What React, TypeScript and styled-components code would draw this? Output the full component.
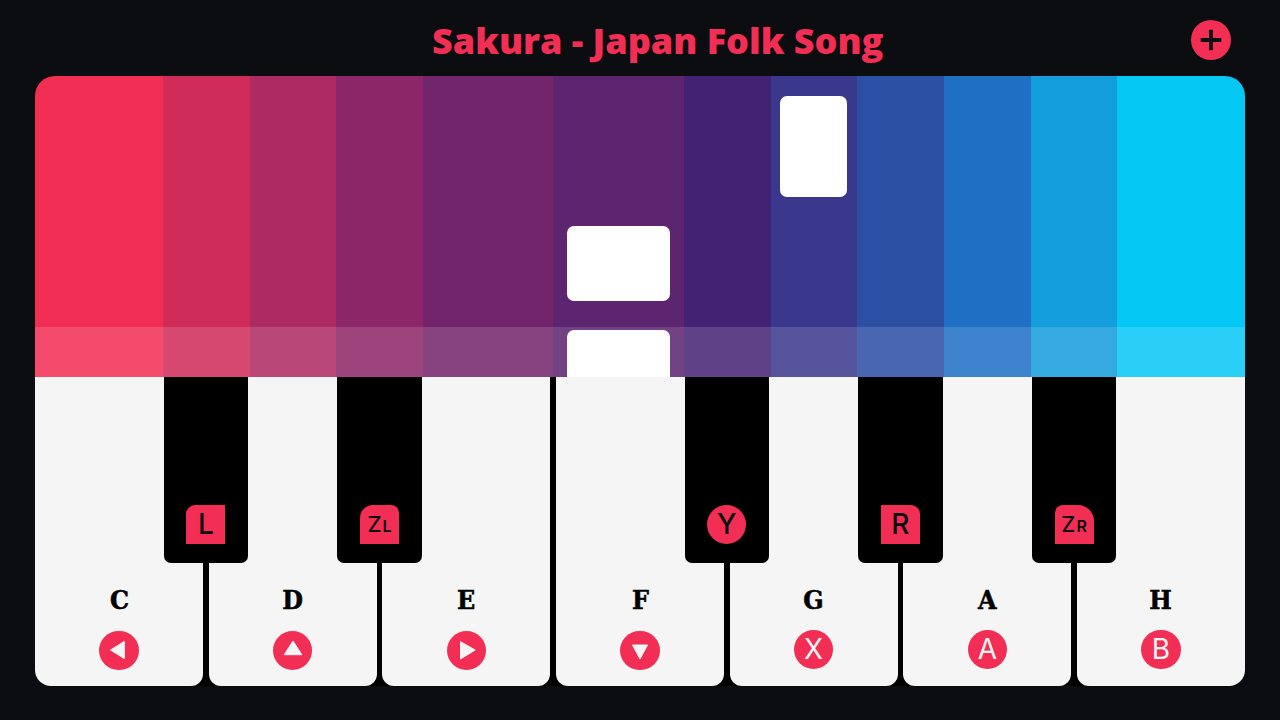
import React from "react";
import styled, { createGlobalStyle } from "styled-components";

const RED = "#f32e54";

const columns = [
  { width: 127.7, color: "#f32e54" },
  { width: 87, color: "#cf2c5a" },
  { width: 86.3, color: "#ae2a62" },
  { width: 86.7, color: "#8d2668" },
  { width: 130.6, color: "#73256c" },
  { width: 130.7, color: "#5d2470" },
  { width: 86.7, color: "#442273" },
  { width: 86, color: "#3a388d" },
  { width: 87.3, color: "#2a4fa3" },
  { width: 87, color: "#1f6fc5" },
  { width: 86, color: "#149ddd" },
  { width: 128, color: "#06c8f5" },
];

const notes = [
  { column: 5, top: 150, height: 75, left: 13.7, right: 14.2 },
  { column: 5, top: 254, height: 80, left: 13.7, right: 14.2 },
  { column: 7, top: 20, height: 101, left: 9.6, right: 9.2 },
];

const Arrow = ({ dir }: { dir: "left" | "up" | "right" | "down" }) => {
  const points = {
    left: "1.5,10 15.3,1.4 15.3,18.6",
    up: "10,1 18.8,14.7 1.2,14.7",
    right: "4.5,1.7 19.2,10 4.5,19",
    down: "2.5,5 17.5,5 10,19",
  }[dir];
  return (
    <svg width="20" height="20" viewBox="0 0 20 20">
      <polygon points={points} fill="#f5f5f5" stroke="#f5f5f5" strokeWidth="1" strokeLinejoin="round" />
    </svg>
  );
};

const whiteKeys = [
  { note: "C", arrow: "left" as const, black: { label: "L", shape: "l" } },
  { note: "D", arrow: "up" as const, black: { label: "Z", small: "L", shape: "zl" } },
  { note: "E", arrow: "right" as const },
  { note: "F", arrow: "down" as const, black: { label: "Y", shape: "round" } },
  { note: "G", button: "X", black: { label: "R", shape: "r" } },
  { note: "A", button: "A", black: { label: "Z", small: "R", shape: "zr" } },
  { note: "H", button: "B" },
];

const App = () => {
  return (
    <Wrapper>
      <GlobalStyle />
      <Header>
        <Title>Sakura - Japan Folk Song</Title>
        <AddButton aria-label="Add">
          <svg width="24" height="24" viewBox="0 0 24 24">
            <path d="M12 1.7v20.6M1.7 12h20.6" stroke="#0c0d10" strokeWidth="3.8" />
          </svg>
        </AddButton>
      </Header>
      <Stage>
        {columns.map((col, i) => (
          <Column key={i} $width={col.width} $color={col.color}>
            {notes
              .filter((n) => n.column === i)
              .map((n, j) => (
                <Note key={j} $top={n.top} $height={n.height} $left={n.left} $right={n.right} />
              ))}
          </Column>
        ))}
        <HitStrip />
      </Stage>
      <Keyboard>
        {whiteKeys.map((key) => (
          <WhiteKey key={key.note}>
            <NoteName>{key.note}</NoteName>
            {key.arrow ? (
              <RoundButton $low>
                <Arrow dir={key.arrow} />
              </RoundButton>
            ) : (
              <RoundButton>{key.button}</RoundButton>
            )}
            {key.black && (
              <BlackKey>
                <Badge $shape={key.black.shape} $combo={!!key.black.small}>
                  {key.black.label}
                  {key.black.small && <BadgeSmall>{key.black.small}</BadgeSmall>}
                </Badge>
              </BlackKey>
            )}
          </WhiteKey>
        ))}
      </Keyboard>
    </Wrapper>
  );
};
export default App;

const GlobalStyle = createGlobalStyle`
  html, body {
    margin: 0;
    background-color: #0c0d10;
  }
`;

const Wrapper = styled.div`
  display: flex;
  flex-direction: column;
  width: 1280px;
  height: 720px;
  padding: 0 35px;
  box-sizing: border-box;
  overflow: hidden;
`;

const Header = styled.header`
  display: flex;
  align-items: center;
  justify-content: space-between;
  height: 76px;
  padding: 0 14px 0 397px;
  box-sizing: border-box;
  flex-shrink: 0;
`;

const Title = styled.h1`
  margin: 6px 0 0;
  font-family: "Open Sans", sans-serif;
  font-size: 36px;
  font-weight: 800;
  line-height: 1;
  color: ${RED};
  white-space: nowrap;
`;

const AddButton = styled.div`
  display: flex;
  align-items: center;
  justify-content: center;
  width: 40px;
  height: 40px;
  margin-top: 3px;
  border-radius: 50%;
  background-color: ${RED};
`;

const Stage = styled.div`
  position: relative;
  display: flex;
  height: 301px;
  flex-shrink: 0;
  border-radius: 20px 20px 0 0;
  overflow: hidden;
`;

const Column = styled.div<{ $width: number; $color: string }>`
  position: relative;
  flex: 0 0 ${(p) => p.$width}px;
  background-color: ${(p) => p.$color};
`;

const Note = styled.div<{ $top: number; $height: number; $left: number; $right: number }>`
  position: absolute;
  z-index: 2;
  top: ${(p) => p.$top}px;
  left: ${(p) => p.$left}px;
  right: ${(p) => p.$right}px;
  height: ${(p) => p.$height}px;
  border-radius: 7px;
  background-color: #ffffff;
`;

const HitStrip = styled.div`
  position: absolute;
  z-index: 1;
  left: 0;
  right: 0;
  bottom: 0;
  height: 49.7px;
  background-color: rgba(255, 255, 255, 0.14);
`;

const Keyboard = styled.div`
  display: flex;
  gap: 5.55px;
  height: 309px;
  flex-shrink: 0;
  background-color: #000000;
  border-radius: 0 0 20px 20px;
`;

const WhiteKey = styled.div`
  position: relative;
  flex: 1;
  display: flex;
  flex-direction: column;
  align-items: center;
  justify-content: flex-end;
  padding-bottom: 16px;
  background-color: #f5f5f5;
  border-radius: 0 0 12px 12px;
  &:first-child {
    border-bottom-left-radius: 16px;
  }
  &:last-child {
    border-bottom-right-radius: 16px;
  }
`;

const NoteName = styled.div`
  margin-bottom: 14px;
  font-family: "DejaVu Serif", serif;
  font-size: 26.5px;
  font-weight: 700;
  line-height: 34px;
  -webkit-text-stroke: 0.6px #000000;
  color: #000000;
  transform: scaleX(0.9);
`;

const RoundButton = styled.div<{ $low?: boolean }>`
  display: flex;
  align-items: center;
  justify-content: center;
  width: 39.5px;
  height: 39.5px;
  margin-bottom: ${(p) => (p.$low ? 0 : 1)}px;
  margin-top: ${(p) => (p.$low ? 0 : -1)}px;
  border-radius: 50%;
  background-color: ${RED};
  font-family: "Inter", sans-serif;
  font-size: 28px;
  font-weight: 400;
  color: #f5f5f5;
`;

const BlackKey = styled.div`
  position: absolute;
  z-index: 3;
  top: 0;
  right: -44.9px;
  display: flex;
  align-items: flex-end;
  justify-content: center;
  width: 84.4px;
  height: 186px;
  padding-bottom: 19px;
  box-sizing: border-box;
  background-color: #000000;
  border-radius: 0 0 7px 7px;
`;

const badgeRadius: Record<string, string> = {
  l: "9px 0 0 0",
  zl: "13px 8px 0 0",
  r: "0 9px 0 0",
  zr: "8px 16px 0 0",
  round: "50%",
};

const Badge = styled.div<{ $shape: string; $combo: boolean }>`
  display: flex;
  align-items: baseline;
  justify-content: center;
  width: 39px;
  height: 39px;
  border-radius: ${(p) => badgeRadius[p.$shape]};
  background-color: ${RED};
  font-family: "Inter", sans-serif;
  font-size: ${(p) => (p.$combo ? 22 : 28)}px;
  font-weight: 500;
  line-height: 39px;
  color: #0c0d10;
`;

const BadgeSmall = styled.span`
  margin-left: 1px;
  font-size: 16px;
  font-weight: 600;
`;
